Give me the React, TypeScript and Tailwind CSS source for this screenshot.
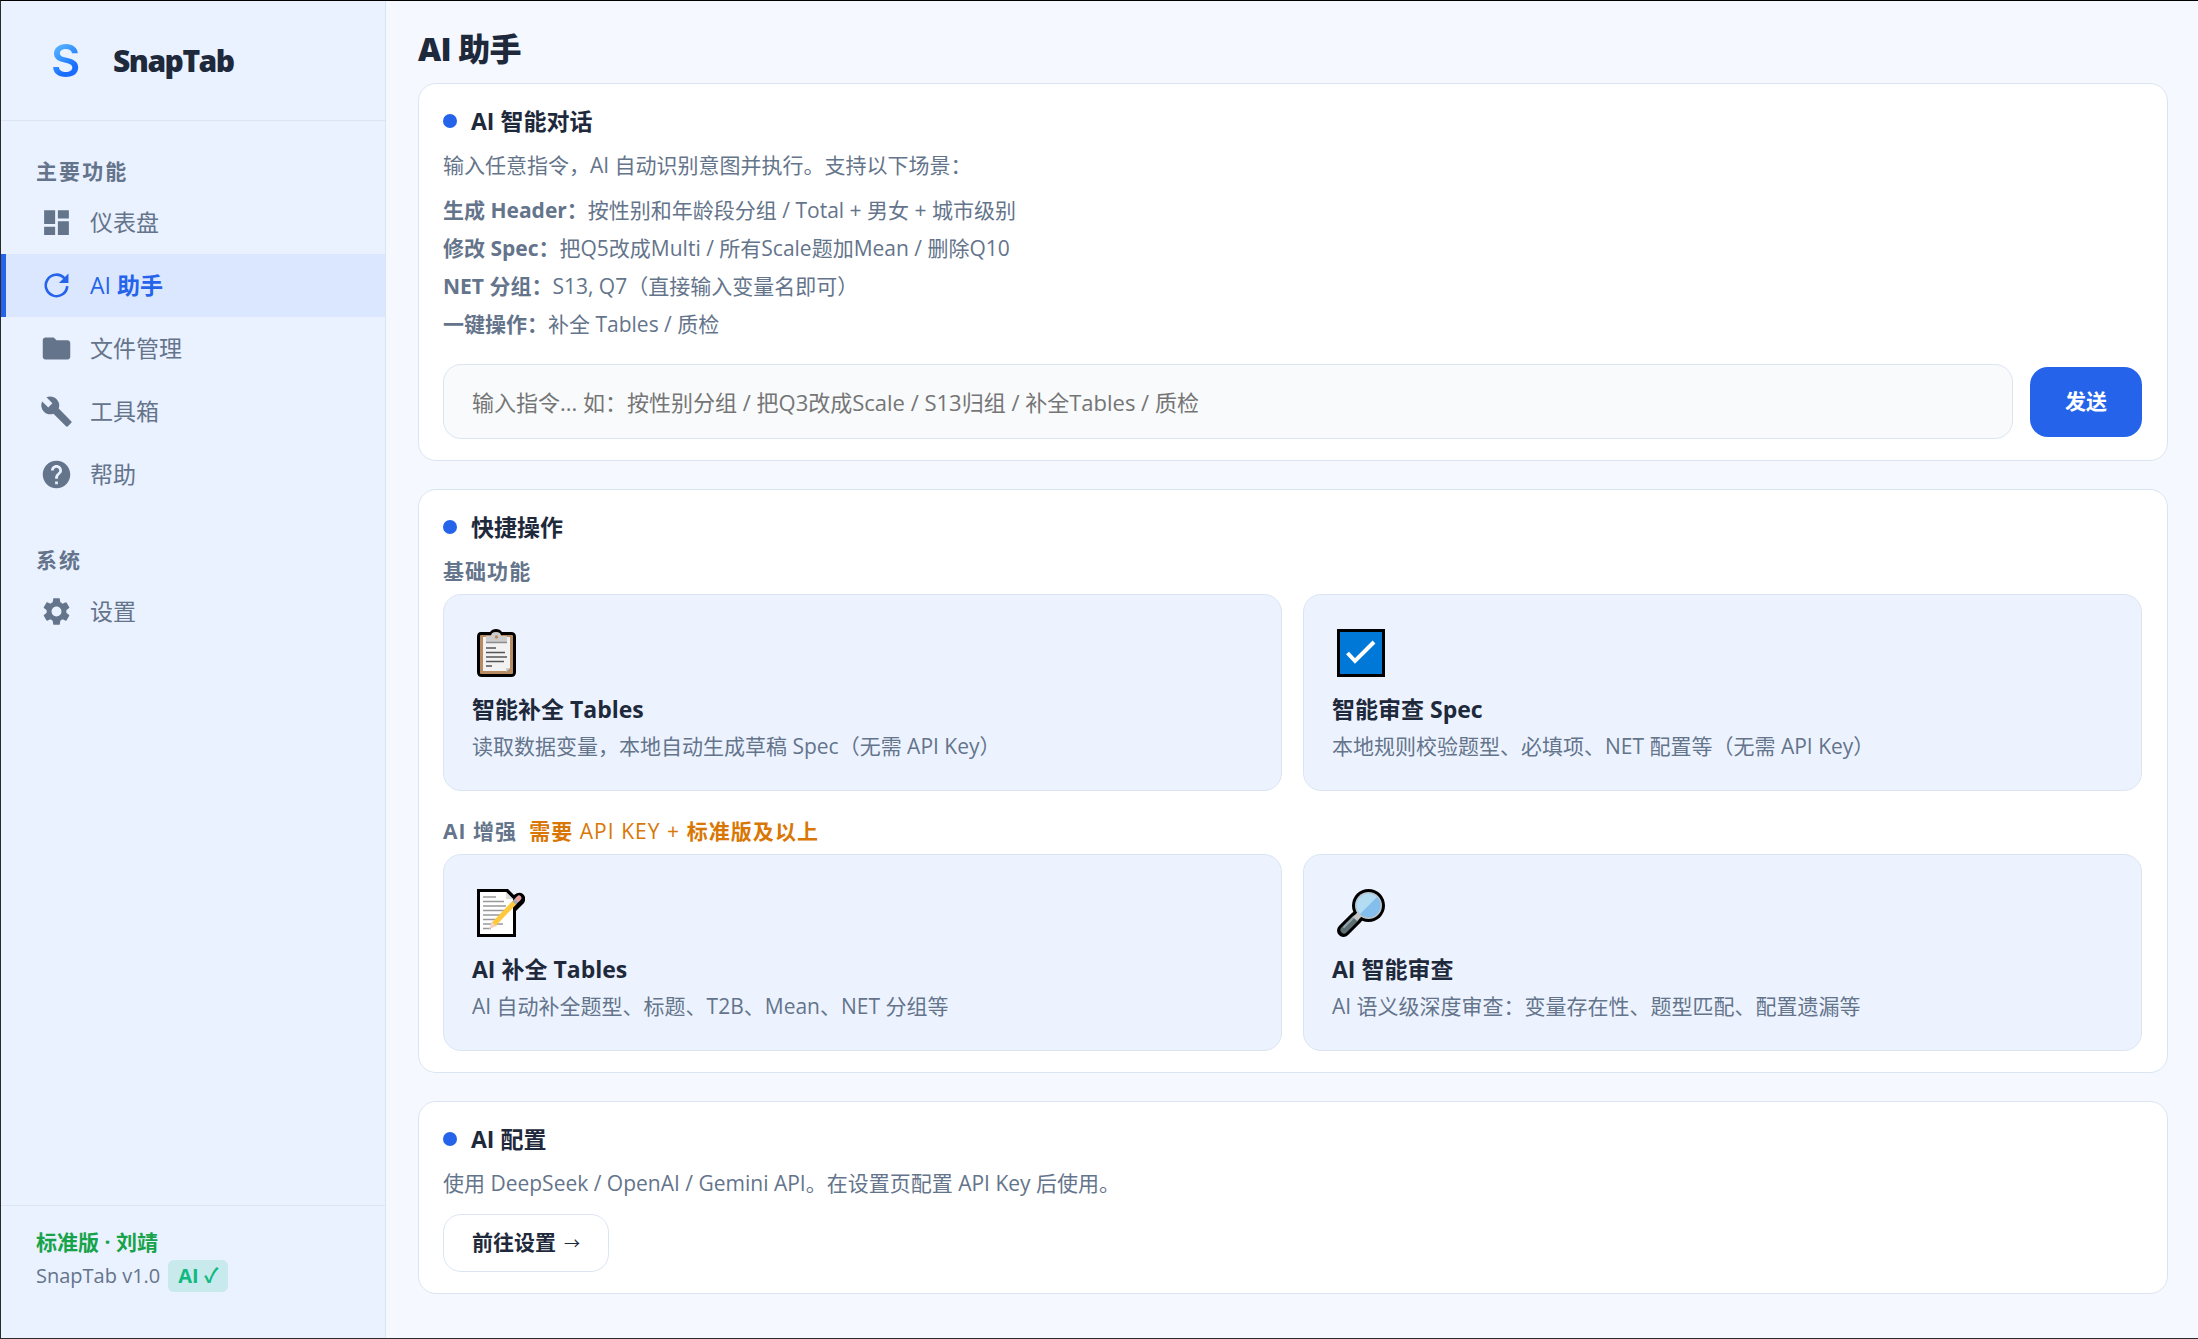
import type { ReactNode } from "react";
import { MdBuild, MdDashboard, MdFolder, MdHelp, MdSettings } from "react-icons/md";

type NavEntry = {
  label: ReactNode;
  key: string;
  icon: (props: { className?: string }) => ReactNode;
  active?: boolean;
};

const mainNav: NavEntry[] = [
  { key: "dashboard", label: "仪表盘", icon: MdDashboard },
  {
    key: "assistant",
    label: (
      <>
        <span className="font-medium">AI</span> 助手
      </>
    ),
    icon: RefreshIcon,
    active: true,
  },
  { key: "files", label: "文件管理", icon: MdFolder },
  { key: "tools", label: "工具箱", icon: MdBuild },
  { key: "help", label: "帮助", icon: MdHelp },
];

const systemNav: NavEntry[] = [{ key: "settings", label: "设置", icon: MdSettings }];

const scenarios = [
  { name: "生成 Header：", text: "按性别和年龄段分组 / Total + 男女 + 城市级别" },
  { name: "修改 Spec：", text: "把Q5改成Multi / 所有Scale题加Mean / 删除Q10" },
  { name: "NET 分组：", text: "S13, Q7（直接输入变量名即可）" },
  { name: "一键操作：", text: "补全 Tables / 质检" },
];

function RefreshIcon({ className }: { className?: string }) {
  return (
    <svg viewBox="0 0 24 24" className={className} aria-hidden="true">
      <path d="M19.8 12.4A7.8 7.8 0 1 1 17.7 6.600" fill="none" stroke="currentColor" strokeWidth="1.900" />
      <path d="M20.700 3.300v6.900h-6.900z" fill="currentColor" />
    </svg>
  );
}

function ClipboardIcon() {
  return (
    <svg viewBox="0 0 48 48" className="size-12" aria-hidden="true">
      <path d="M4 3h9q2-3 6-3t6 3h9q5 0 5 5v35q0 5-5 5H5q-5 0-5-5V8q0-5 4-5z" fill="#000" />
      <rect x="3" y="6" width="33" height="39" rx="1" fill="#b88b62" />
      <path d="M6 8h27v31l-4 3H6z" fill="#f2f2f2" />
      <path d="M29 43v-4h4z" fill="#d0d0d0" />
      <path d="M9 7h5q0-4 5-4t5 4h6v6H9z" fill="#ccc" />
      <circle cx="19.500" cy="8" r="1.700" fill="#b88b62" />
      <path d="M9 13.500h21" stroke="#8c8c8c" strokeWidth="1.500" />
      <path d="M9 19h10M9 23.500h19M9 28h21M9 32.500h18M9 37h6" stroke="#555" strokeWidth="1.700" />
    </svg>
  );
}

function CheckBoxIcon() {
  return (
    <svg viewBox="0 0 48 48" className="size-12" aria-hidden="true">
      <rect width="48" height="48" fill="#000" />
      <rect x="3" y="3" width="42" height="42" fill="#0078d7" />
      <path d="M10.500 24l7.500 8 19-19" fill="none" stroke="#fff" strokeWidth="4" />
    </svg>
  );
}

function MemoIcon() {
  return (
    <svg viewBox="0 0 48 48" className="size-12" aria-hidden="true">
      <path d="M0 0h31l6 6q5-4 9-1 4 4 1 9l-8 8v26H0z" fill="#000" />
      <path d="M3 3h26l7 7v35H3z" fill="#fff" />
      <path d="M29 3v7h7z" fill="#ddd" />
      <path
        d="M6 8h13M6 12.500h21M6 17h23M6 21.500h21M6 26h21M6 30.500h15M6 35h20M6 39.500h8"
        stroke="#999"
        strokeWidth="1.400"
      />
      <path d="M12 40l3-8 5 5z" fill="#f5d5c0" />
      <path d="M17 35L38 13" stroke="#ffc83d" strokeWidth="5" />
      <path d="M37 14l4-4" stroke="#aaa" strokeWidth="5" />
      <path d="M41 10l1-1" stroke="#e8a0a0" strokeWidth="5" strokeLinecap="round" />
    </svg>
  );
}

function MagnifierIcon() {
  return (
    <svg viewBox="0 0 48 48" className="size-12" aria-hidden="true">
      <path d="M6.500 41.500l13-13" stroke="#000" strokeWidth="13" strokeLinecap="round" />
      <circle cx="31.500" cy="16.500" r="16.500" fill="#000" />
      <path d="M7 41l11-11" stroke="#5f7075" strokeWidth="7" strokeLinecap="round" />
      <path d="M7 38l10-10" stroke="#93a5aa" strokeWidth="2" strokeLinecap="round" />
      <path d="M18 30l5-5" stroke="#c4c4c4" strokeWidth="6" />
      <circle cx="31.500" cy="16.500" r="13.500" fill="#c0c4c8" />
      <circle cx="31.500" cy="16.500" r="12" fill="#83beec" />
      <path d="M23 25a12 12 0 0 1 17-17z" fill="#b3dcf3" />
    </svg>
  );
}

function NavItem({ label, icon: Icon, active }: Omit<NavEntry, "key">) {
  return (
    <a
      href="#"
      aria-current={active ? "page" : undefined}
      className={
        active
          ? "flex h-[63px] items-center gap-[17px] border-l-[5px] border-[#2563eb] bg-[#dbe7ff] pl-[34px] text-[23px] font-semibold text-[#2563eb]"
          : "flex h-[63px] items-center gap-[17px] pl-[39px] text-[23px] text-[#64748b]"
      }
    >
      <Icon className="size-[33px]" />
      <span>{label}</span>
    </a>
  );
}

function NavGroup({ title, items }: { title: string; items: NavEntry[] }) {
  return (
    <div>
      <h2 className="px-[35px] pb-1 text-[21px] leading-8 font-bold tracking-widest text-[#64748b]">{title}</h2>
      {items.map(({ key, ...item }) => (
        <NavItem key={key} {...item} />
      ))}
    </div>
  );
}

function Card({ title, children }: { title: string; children: ReactNode }) {
  return (
    <section className="rounded-[18px] border border-[#dbe5f1] bg-white pt-[19px] pr-[25px] pb-[21px] pl-6">
      <h2 className="flex items-center gap-3.5 text-[23px] leading-9 font-bold text-[#1e293b]">
        <span className="size-3.5 rounded-full bg-[#2563eb]" />
        {title}
      </h2>
      {children}
    </section>
  );
}

function ActionTile({ icon, title, text }: { icon: ReactNode; title: string; text: string }) {
  return (
    <button
      type="button"
      className="flex flex-col rounded-[18px] border border-[#dbe5f1] bg-[#ecf3ff] px-7 pt-[34px] pb-[25px] text-left"
    >
      <span className="pl-[5px]">{icon}</span>
      <span className="mt-[14px] text-[23px] leading-9 font-bold text-[#1e293b]">{title}</span>
      <span className="text-[21px] leading-[38px] text-[#64748b]">{text}</span>
    </button>
  );
}

export default function App() {
  return (
    <div className="flex min-h-screen border-y border-l border-[#2b2b2b] border-t-black bg-[#f5f8ff] font-['Open_Sans','Noto_Sans_CJK_SC',sans-serif]">
      <aside className="flex w-[385px] shrink-0 flex-col border-r border-[#dbe5f1] bg-[#eaf1ff]">
        <div className="flex h-[120px] items-center border-b border-[#dbe5f1] pl-[50px]">
          <span className="w-[62px] bg-linear-to-br from-[#5cb8ff] from-10% to-[#1a6dff] to-50% bg-clip-text font-['Inter',sans-serif] text-[45px] leading-none font-semibold text-transparent">
            S
          </span>
          <span className="text-[30px] font-extrabold tracking-tighter text-[#1e293b]">SnapTab</span>
        </div>
        <nav className="flex grow flex-col gap-[38px] pt-[34px]">
          <NavGroup title="主要功能" items={mainNav} />
          <NavGroup title="系统" items={systemNav} />
        </nav>
        <div className="border-t border-[#dbe5f1] px-[35px] pt-[18px] pb-[46px] text-[#64748b]">
          <p className="text-[21px] leading-9 font-bold text-[#16a34a]">标准版 · 刘靖</p>
          <p className="flex items-center gap-2 text-[20px] leading-8">
            SnapTab v1.0
            <span className="rounded-md bg-[#c9eaec] px-2.5 font-bold text-[#10b981]">AI ✓</span>
          </p>
        </div>
      </aside>

      <main className="flex grow flex-col pt-6 pr-[30px] pb-7 pl-8">
        <h1 className="pb-[10px] text-[32px] leading-[48px] font-extrabold tracking-tight text-[#1e293b]">AI 助手</h1>
        <div className="flex flex-col gap-7">
          <Card title="AI 智能对话">
            <p className="pt-2 text-[21px] leading-9 text-[#64748b]">
              输入任意指令，AI 自动识别意图并执行。支持以下场景：
            </p>
            <ul className="pt-2 text-[21px] leading-[38px] text-[#64748b]">
              {scenarios.map((s) => (
                <li key={s.name}>
                  <strong>{s.name}</strong>
                  {s.text}
                </li>
              ))}
            </ul>
            <form className="flex items-center gap-[17px] pt-[21px]" onSubmit={(e) => e.preventDefault()}>
              <input
                type="text"
                aria-label="输入指令"
                placeholder="输入指令... 如：按性别分组 / 把Q3改成Scale / S13归组 / 补全Tables / 质检"
                className="h-[75px] min-w-0 grow rounded-[18px] border border-[#dbe5f1] bg-[#f8fafc] px-7 text-[22px] text-[#1e293b] placeholder:text-[#757575]"
              />
              <button type="submit" className="h-[70px] w-28 rounded-[18px] bg-[#2563eb] text-[21px] font-bold text-white">
                发送
              </button>
            </form>
          </Card>

          <Card title="快捷操作">
            <h3 className="pt-2 pb-[5px] text-[21px] leading-9 font-bold tracking-wider text-[#64748b]">基础功能</h3>
            <div className="grid grid-cols-2 gap-[21px]">
              <ActionTile
                icon={<ClipboardIcon />}
                title="智能补全 Tables"
                text="读取数据变量，本地自动生成草稿 Spec（无需 API Key）"
              />
              <ActionTile
                icon={<CheckBoxIcon />}
                title="智能审查 Spec"
                text="本地规则校验题型、必填项、NET 配置等（无需 API Key）"
              />
            </div>
            <h3 className="flex gap-3 pt-[22px] pb-[5px] text-[21px] leading-9 font-bold tracking-wider text-[#64748b]">
              AI 增强
              <span className="text-[#d97706]">
                需要 <span className="font-medium">API KEY +</span> 标准版及以上
              </span>
            </h3>
            <div className="grid grid-cols-2 gap-[21px]">
              <ActionTile
                icon={<MemoIcon />}
                title="AI 补全 Tables"
                text="AI 自动补全题型、标题、T2B、Mean、NET 分组等"
              />
              <ActionTile
                icon={<MagnifierIcon />}
                title="AI 智能审查"
                text="AI 语义级深度审查：变量存在性、题型匹配、配置遗漏等"
              />
            </div>
          </Card>

          <Card title="AI 配置">
            <p className="pt-2 text-[21px] leading-9 text-[#64748b]">
              使用 DeepSeek / OpenAI / Gemini API。在设置页配置 API Key 后使用。
            </p>
            <button
              type="button"
              className="mt-[13px] flex h-[58px] items-center gap-2 rounded-[18px] border border-[#dbe5f1] bg-white px-7 text-[21px] font-bold text-[#1e293b]"
            >
              前往设置 <span className="text-base font-normal">→</span>
            </button>
          </Card>
        </div>
      </main>
    </div>
  );
}
